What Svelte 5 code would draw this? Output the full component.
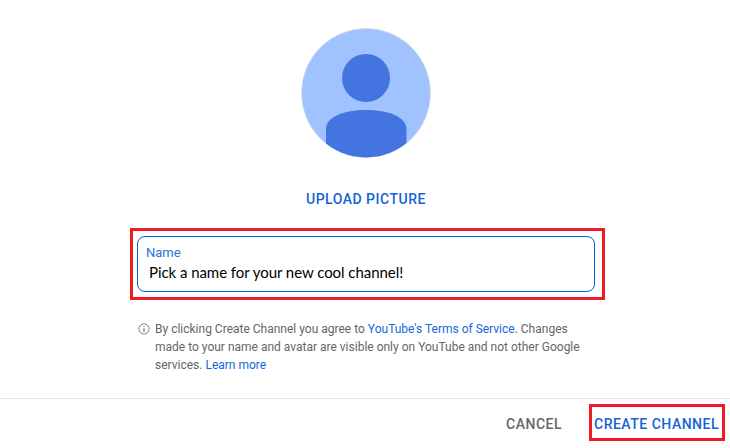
<script>
  let name = 'Pick a name for your new cool channel!';
</script>

<main>
  <section class="body">
    <svg class="avatar" viewBox="0 0 130 130" aria-label="Profile picture">
      <defs><clipPath id="round"><circle cx="65" cy="65" r="64.4" /></clipPath></defs>
      <circle cx="65" cy="65" r="64.5" fill="#a0c2ff" stroke="#d8dbe0" stroke-width=".7" />
      <g clip-path="url(#round)" fill="#4474e0">
        <circle cx="65" cy="50" r="24" />
        <path d="M25 130V101C25 89 43 82 65 82s40.500 7 40.500 19V130z" />
      </g>
    </svg>
    <button class="upload">UPLOAD PICTURE</button>
    <div class="highlight field-mark">
      <div class="field">
        <span class="label">Name</span>
        <span class="value">{name}</span>
      </div>
    </div>
    <div class="notice">
      <svg viewBox="0 0 12 12" width="12" height="12" aria-hidden="true">
        <circle cx="6" cy="6" r="5.1" fill="none" stroke="#666" stroke-width=".8" />
        <path d="M5.500 3h1v1h-1zM5.500 5h1v4h-1z" fill="#666" />
      </svg>
      <p>By clicking Create Channel you agree to <a href="#terms">YouTube's Terms of Service</a>. Changes<br />made to your name and avatar are visible only on YouTube and not other Google<br />services. <a href="#more">Learn more</a></p>
    </div>
  </section>
  <footer>
    <button class="cancel">CANCEL</button>
    <div class="highlight create-mark"><button class="create">CREATE CHANNEL</button></div>
  </footer>
</main>

<style>
  :global(body) { margin: 0; background: #fff; }
  main {
    width: 730px; height: 448px; box-sizing: border-box; overflow: hidden;
    display: flex; flex-direction: column; background: #fff;
    font-family: Roboto, "Liberation Sans", sans-serif;
  }
  .body { height: 398px; flex: none; box-sizing: border-box; padding: 28px 0 0 130px; }
  .avatar { display: block; width: 130px; height: 130px; margin-left: 171px; }
  button {
    border: 0; padding: 0; background: none; white-space: nowrap;
    font: 500 14px/20px Roboto, "Liberation Sans", sans-serif; letter-spacing: .5px; color: #1365d5;
  }
  .upload { display: block; margin: 31px 0 0 176px; }
  .highlight { box-sizing: border-box; border: 3px solid #ed1c24; }
  .field-mark { width: 475px; height: 72px; margin-top: 19px; padding: 5px 0 0 4px; }
  .field {
    width: 458px; height: 56px; box-sizing: border-box; border: 1px solid #065fd4;
    border-radius: 8px; padding: 7px 0 0 8px; display: flex; flex-direction: column;
  }
  .label { font-size: 13px; line-height: 18px; color: #2b70d9; }
  .value { font: 15px/20px Lato, sans-serif; letter-spacing: -.05px; color: #000; padding: 0 0 0 3px; white-space: nowrap; }
  .notice { display: flex; gap: 5px; margin: 20px 0 0 8px; color: #666; }
  .notice svg { flex: none; margin-top: 3px; }
  p { margin: 0; font-size: 12px; line-height: 18px; white-space: nowrap; }
  a { color: #1267dc; text-decoration: none; }
  footer {
    height: 50px; box-sizing: border-box; border-top: 1px solid #e3e3e3; padding: 5px 5px 0 0;
    display: flex; justify-content: flex-end; align-items: flex-start;
  }
  .cancel { color: #666; margin: 10px 27px 0 0; }
  .create-mark { width: 136px; height: 37px; padding: 7px 0 0 2px; display: flex; align-items: flex-start; }
</style>
